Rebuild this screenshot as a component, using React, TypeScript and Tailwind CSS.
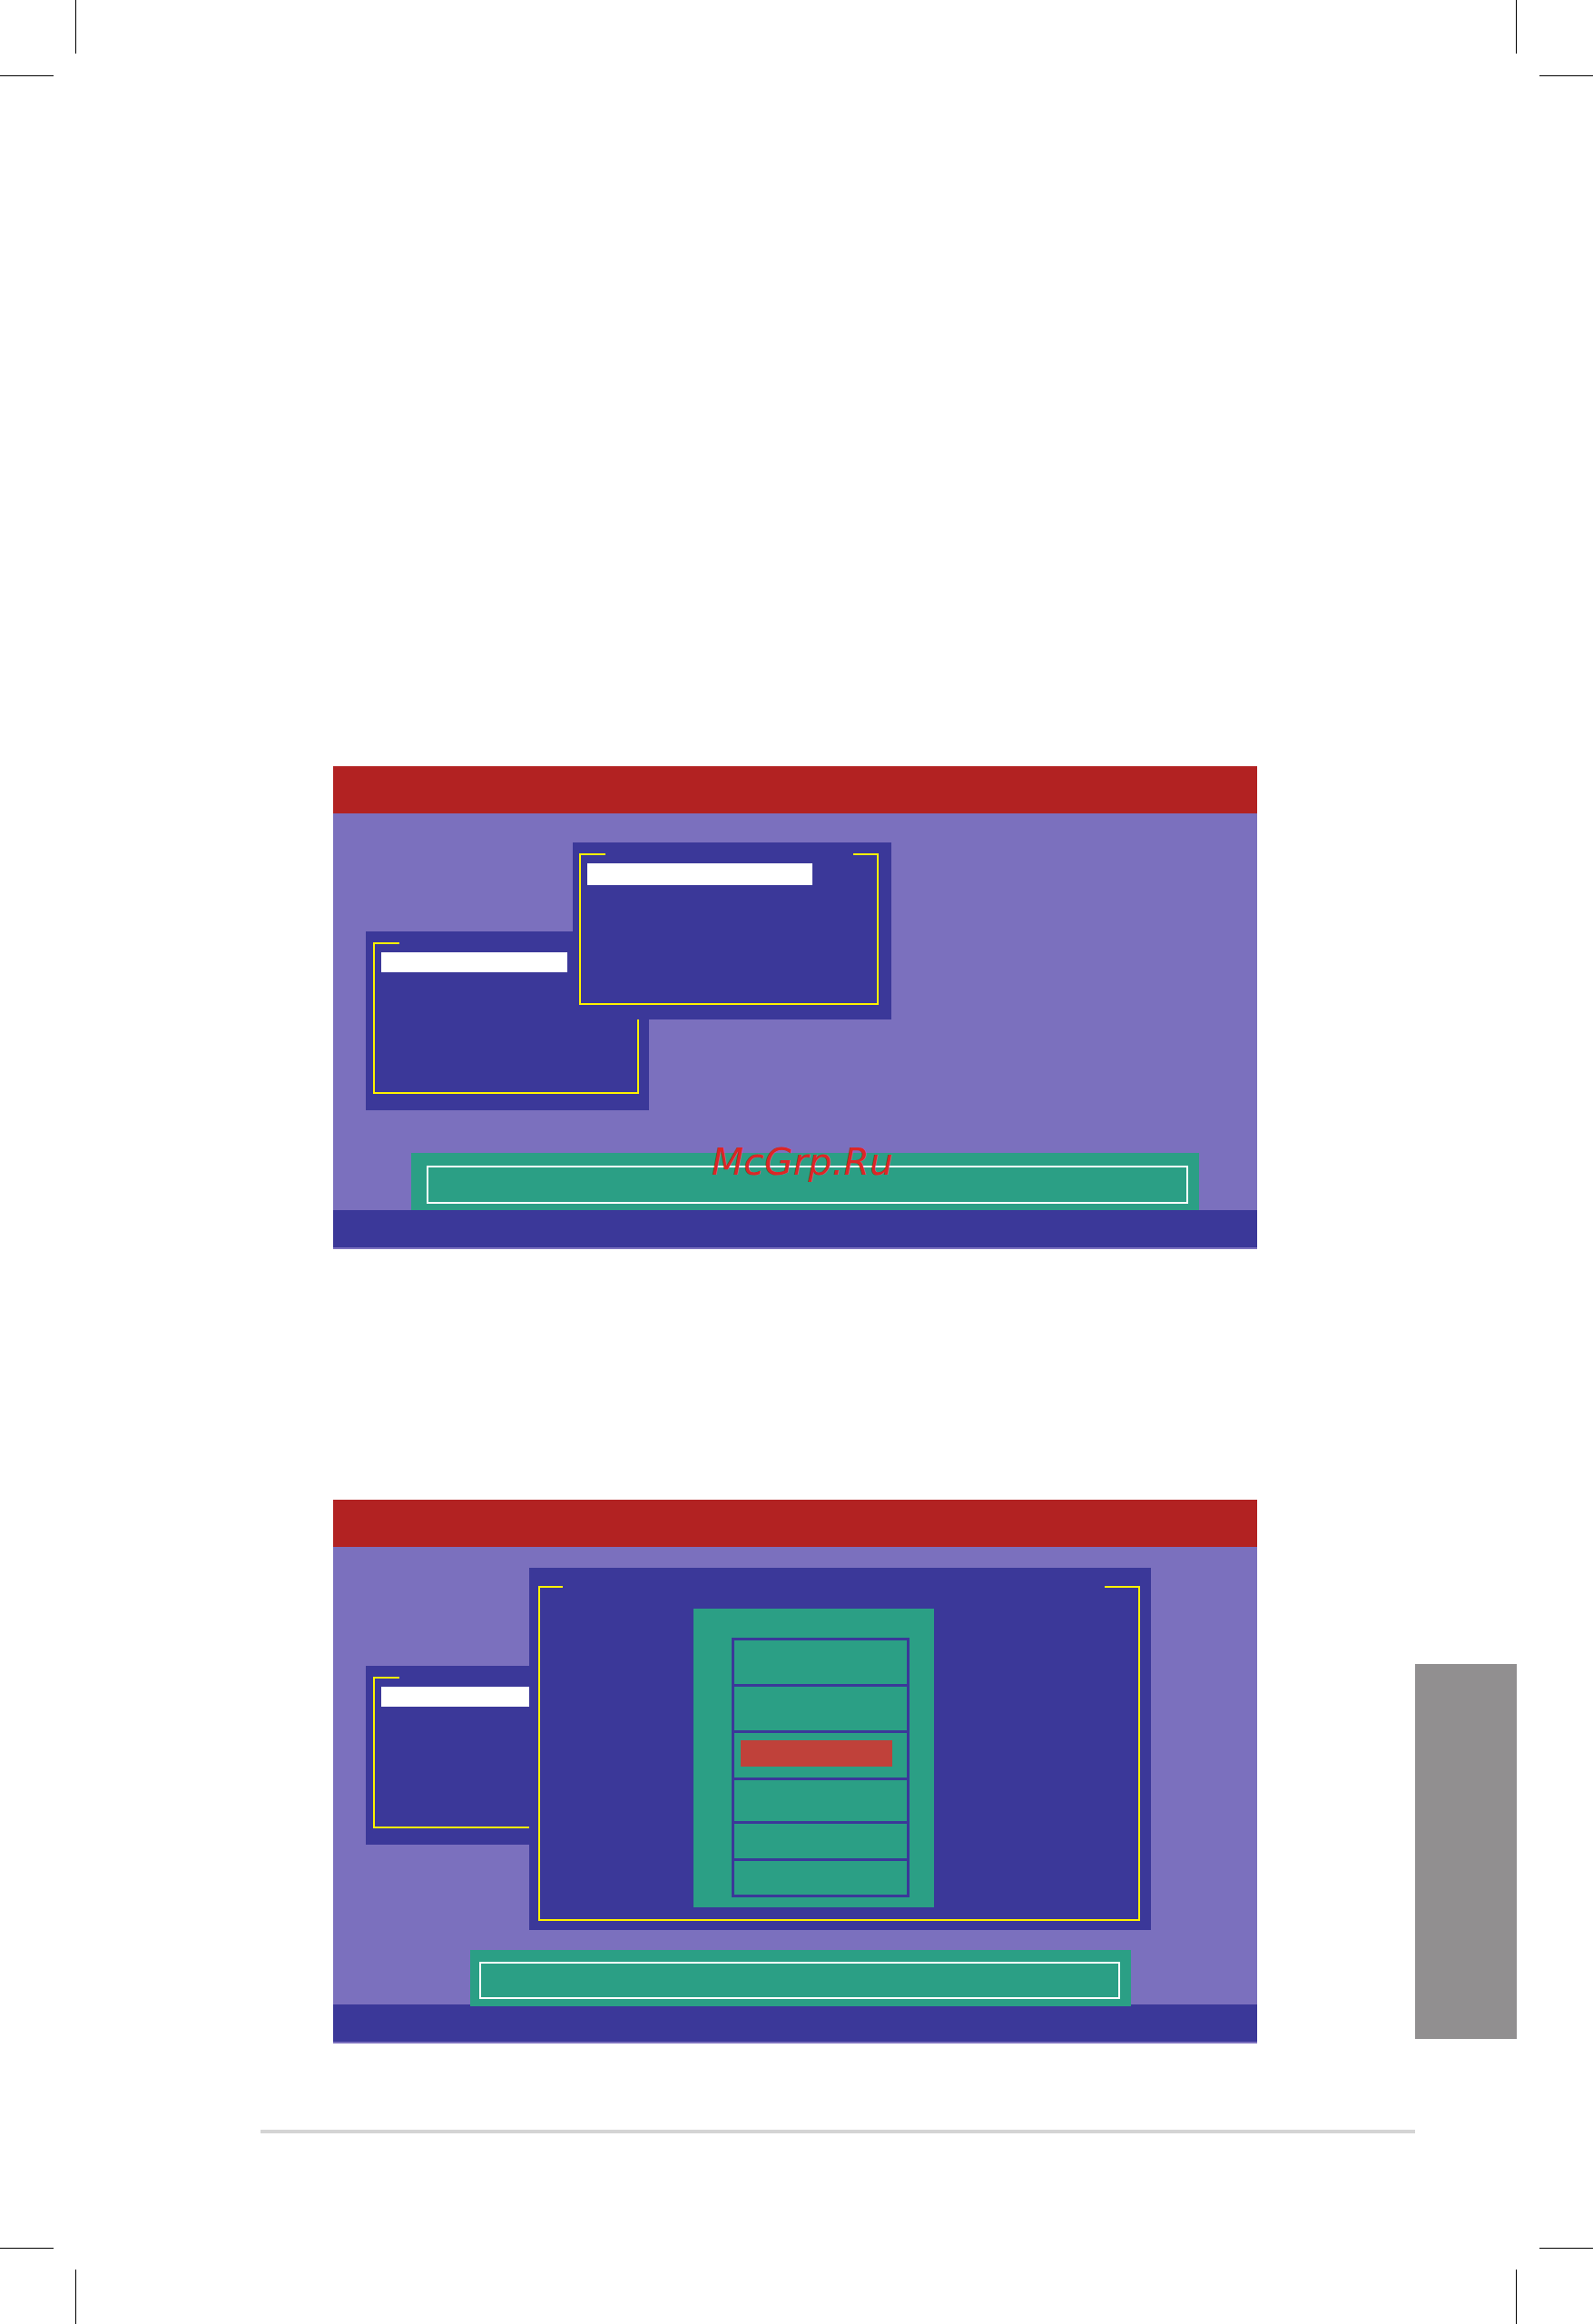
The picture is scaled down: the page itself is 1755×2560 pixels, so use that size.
const RED = "bg-[#b22222]";

function Frame({
  leftCorner,
  rightCorner,
  children,
}: {
  leftCorner: number;
  rightCorner: number;
  children?: React.ReactNode;
}) {
  // yellow box frame: open top edge with only the two corner stubs drawn
  return (
    <div className="flex h-full flex-col border-x-2 border-b-2 border-[#fff200]">
      <div className="-mx-[2px] flex h-[2px] shrink-0 justify-between">
        <div className="h-[2px] bg-[#fff200]" style={{ width: leftCorner }} />
        <div className="h-[2px] bg-[#fff200]" style={{ width: rightCorner }} />
      </div>
      {children}
    </div>
  );
}

function SmallDialog({ className, barWidth }: { className: string; barWidth: string }) {
  return (
    <div className={`absolute bg-[#3b3899] ${className}`}>
      <Frame leftCorner={29} rightCorner={28}>
        <div className={`ml-[7px] mt-[9px] h-[22px] bg-white ${barWidth}`} />
      </Frame>
    </div>
  );
}

function StatusBox({ className }: { className: string }) {
  return (
    <div className={`bg-[#2b9f85] ${className}`}>
      <div className="h-full border-2 border-white" />
    </div>
  );
}

const ITEMS = [48, 48, 49, 45, 38, 37];

export default function App() {
  return (
    <div className="relative h-[2560px] w-[1755px] overflow-hidden bg-white pl-[287px] pt-[844px] font-['DejaVu_Sans',sans-serif]">
      {/* crop marks */}
      <div className="absolute left-[83px] top-0 h-[59px] w-px bg-black" />
      <div className="absolute left-0 top-[83px] h-px w-[59px] bg-black" />
      <div className="absolute left-[1670px] top-0 h-[59px] w-px bg-black" />
      <div className="absolute right-0 top-[83px] h-px w-[59px] bg-black" />
      <div className="absolute left-0 top-[2476px] h-px w-[59px] bg-black" />
      <div className="absolute left-[83px] top-[2500px] h-[60px] w-px bg-black" />
      <div className="absolute right-0 top-[2476px] h-px w-[59px] bg-black" />
      <div className="absolute left-[1670px] top-[2500px] h-[60px] w-px bg-black" />

      {/* screen 1 */}
      <div className="ml-[80px] flex w-[1018px] flex-col bg-[#7b70be] pb-[2px]">
        <div className={`h-[52px] ${RED}`} />
        <div className="relative flex h-[437px] flex-col justify-end">
          <div className="absolute left-[264px] top-[32px] z-10 h-[195px] w-[351px] bg-[#3b3899] pb-[16px] pl-[7px] pr-[14px] pt-[12px]">
            <Frame leftCorner={29} rightCorner={28}>
              <div className="ml-[7px] mt-[9px] h-[24px] w-[248px] bg-white" />
            </Frame>
          </div>
          <SmallDialog
            className="left-[36px] top-[130px] h-[197px] w-[312px] pb-[18px] pl-[8px] pr-[11px] pt-[12px]"
            barWidth="w-[205px]"
          />
          <StatusBox className="ml-[86px] h-[63px] w-[868px] pb-[7px] pl-[17px] pr-[12px] pt-[14px]" />
          <div className="absolute left-[417px] top-[364px] z-20 text-[41px] italic leading-none text-[#dc2626]">
            McGrp.Ru
          </div>
        </div>
        <div className="h-[41px] bg-[#3b3899]" />
      </div>

      {/* screen 2 + side tab */}
      <div className="ml-[80px] mt-[276px] flex items-end">
        <div className="flex w-[1018px] flex-col bg-[#7b70be] pb-[2px]">
          <div className={`h-[52px] ${RED}`} />
          <div className="relative flex h-[504px] flex-col justify-end">
            <SmallDialog
              className="left-[36px] top-[131px] h-[197px] w-[312px] pb-[18px] pl-[8px] pr-[11px] pt-[12px]"
              barWidth="w-[205px]"
            />
            <div className="absolute left-[216px] top-[23px] z-10 h-[399px] w-[685px] bg-[#3b3899] pb-[10px] pl-[10px] pr-[12px] pt-[20px]">
              <Frame leftCorner={27} rightCorner={39}>
                <div className="ml-[169px] mt-[23px] h-[329px] w-[265px] bg-[#2b9f85] pl-[42px] pt-[32px]">
                  <div className="flex w-[196px] flex-col gap-[3px] bg-[#3b3899] p-[3px]">
                    {ITEMS.map((h, i) => (
                      <div key={i} className="bg-[#2b9f85]" style={{ height: h }}>
                        {i === 2 && <div className="ml-[7px] mt-[8px] h-[29px] w-[167px] bg-[#c0413a]" />}
                      </div>
                    ))}
                  </div>
                </div>
              </Frame>
            </div>
            <StatusBox className="relative z-10 -mb-[2px] ml-[151px] h-[62px] w-[728px] pb-[8px] pl-[10px] pr-[12px] pt-[13px]" />
          </div>
          <div className="h-[41px] bg-[#3b3899]" />
        </div>
        <div className="mb-[5px] ml-[174px] h-[413px] w-[112px] bg-[#918f90]" />
      </div>

      {/* footer rule */}
      <div className="mt-[95px] h-[4px] w-[1272px] bg-[#d4d4d4]" />
    </div>
  );
}
